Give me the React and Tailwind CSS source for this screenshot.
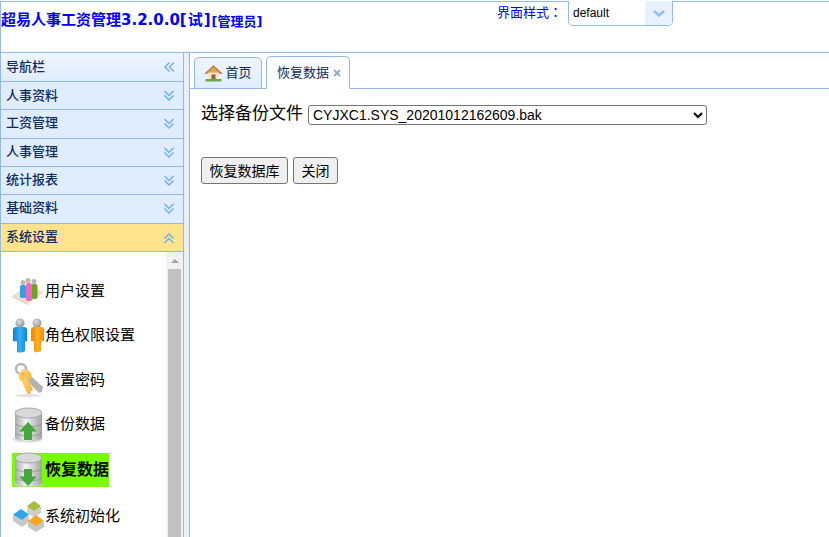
import React from 'react';

const cjk = { fontFamily: '"Liberation Sans", "Noto Sans CJK SC", sans-serif' };
const titleFont = { fontFamily: '"DejaVu Sans", "Noto Sans CJK SC", sans-serif' };

const Chevrons = ({ dir = 'down' }) => {
  const rotate = { down: 0, up: 180, left: 90 }[dir];
  return (
    <svg width="12" height="12" viewBox="0 0 12 12" fill="none" stroke="#6fb0ec" strokeWidth="1.5" style={{ transform: `rotate(${rotate}deg)` }}>
      <path d="M1.5 1 6 5.500 10.500 1" />
      <path d="M1.5 5.500 6 10 10.500 5.500" />
    </svg>
  );
};

const HouseIcon = () => (
  <svg width="19" height="18" viewBox="0 0 19 18">
    <path d="M4 8h11v7H4z" fill="#f5e6c6" />
    <path d="M.5 9.500 9.500 1l9 8.500-2 .8L9.500 4.500 2.500 10.300z" fill="#c4803a" />
    <path d="M9.500 3 15.500 8.500H3.500z" fill="#dba25c" />
    <path d="M7.500 10.500h4V15h-4z" fill="#8f6234" />
    <path d="M1.500 15h16v2.500h-16z" fill="#6aa84f" />
  </svg>
);

const UsersIcon = () => (
  <svg width="33" height="27" viewBox="0 0 33 27">
    <path d="M0 18 15 8l17 6-16 12z" fill="#f1e0c9" />
    <path d="M0 18l16 8v1L0 19z" fill="#d9c3a4" />
    <circle cx="11" cy="4.500" r="2.500" fill="#b9b9b9" />
    <circle cx="16" cy="2.500" r="2.500" fill="#c9b998" />
    <circle cx="22" cy="3.500" r="2.500" fill="#b5b5b5" />
    <rect x="8" y="7" width="6" height="13" rx="1.500" fill="#2fa3e6" />
    <rect x="19.500" y="6" width="6" height="15" rx="2" fill="#6aa51e" />
    <rect x="14" y="5" width="6" height="18" rx="2" fill="#ef66c4" />
  </svg>
);

const RolesIcon = () => (
  <svg width="32" height="35" viewBox="0 0 32 35">
    <defs>
      <radialGradient id="head" cx="0.4" cy="0.35" r="0.7">
        <stop offset="0" stopColor="#dedede" />
        <stop offset="1" stopColor="#8f8f8f" />
      </radialGradient>
      <linearGradient id="blue" x1="0" x2="1" y1="0" y2="0">
        <stop offset="0" stopColor="#0d7fd6" />
        <stop offset="0.5" stopColor="#35b0f2" />
        <stop offset="1" stopColor="#0d86dc" />
      </linearGradient>
      <linearGradient id="orange" x1="0" x2="1" y1="0" y2="0">
        <stop offset="0" stopColor="#f08000" />
        <stop offset="0.5" stopColor="#ffb020" />
        <stop offset="1" stopColor="#f58a00" />
      </linearGradient>
    </defs>
    <circle cx="7" cy="5" r="4.500" fill="url(#head)" />
    <path d="M0 12q0-3 3-3h8q3 0 3 3v11l-2 .5V33q-2 2-7 1.500L4 34V23.500L0 23z" fill="url(#blue)" />
    <circle cx="24" cy="5" r="4.500" fill="url(#head)" />
    <path d="M18 12q0-3 3-3h7q3 0 3 3v11l-3 .5V33q-2 1.500-6 1l-1-1V23.500L18 23z" fill="url(#orange)" />
  </svg>
);

const KeyIcon = () => (
  <svg width="32" height="34" viewBox="0 0 32 34">
    <defs>
      <linearGradient id="gold" x1="0" x2="1" y1="0" y2="1">
        <stop offset="0" stopColor="#ffd97a" />
        <stop offset="1" stopColor="#f3ae3a" />
      </linearGradient>
    </defs>
    <path d="M10 6 30 24l-1 5-3 1L7 11z" fill="#b3b3b3" />
    <circle cx="8" cy="6" r="5" fill="none" stroke="#b8b8b8" strokeWidth="2.500" />
    <circle cx="12" cy="13" r="6.500" fill="url(#gold)" />
    <path d="M13 14 20 26l-1 2-2 .5 1 2-2 1-2-1.500-5-11z" fill="url(#gold)" />
    <circle cx="10" cy="11" r="1.500" fill="#e2b04f" />
    <ellipse cx="15" cy="32.500" rx="13" ry="1.500" fill="#e0e0e0" />
  </svg>
);

const DbIcon = ({ up = false, id }) => (
  <svg width="32" height="36" viewBox="0 0 32 36">
    <defs>
      <linearGradient id={id} x1="0" x2="1" y1="0" y2="0">
        <stop offset="0" stopColor="#a9a9a9" />
        <stop offset="0.4" stopColor="#f4f4f4" />
        <stop offset="1" stopColor="#a2a2a2" />
      </linearGradient>
    </defs>
    <ellipse cx="15" cy="32" rx="15" ry="3.500" fill="#cdcdcd" opacity="0.7" />
    <path d="M2 6v24q0 4 13.500 4T29 30V6z" fill={`url(#${id})`} />
    <path d="M2 15q0 4 13.500 4T29 15v1.500q0 4-13.500 4T2 16.500zM2 24q0 4 13.500 4T29 24v1.500q0 4-13.500 4T2 25.500z" fill="#8f8f8f" opacity="0.55" />
    <ellipse cx="15.500" cy="6" rx="13.500" ry="5" fill="#d8d8d8" stroke="#a6a6a6" />
    {up ? (
      <path d="M15 15l9 9.500h-5V33h-8v-8.500H6z" fill="#45a83f" />
    ) : (
      <path d="M11 17h8v7.500h5L15 34l-9-9.500h5z" fill="#45a83f" />
    )}
  </svg>
);

const BlocksIcon = () => (
  <svg width="32" height="31" viewBox="0 0 32 31">
    <path d="M0 14v6l9 6 7-5v-6z" fill="#c9c9c9" />
    <path d="M8 8l8 5.500-7 5.500-9-5.500z" fill="#2ea6e6" />
    <path d="M14 6v6l7 4 7-4V6z" fill="#cdcdcd" />
    <path d="M21 0l7 5-7 5-7-5z" fill="#a8bc3a" />
    <path d="M15 21v5l8 5 8-5v-5z" fill="#c6c6c6" />
    <path d="M23 14l8 6-8 5-8-5z" fill="#f7a823" />
  </svg>
);

const sections = ['人事资料', '工资管理', '人事管理', '统计报表', '基础资料'];

const menu = [
  { label: '用户设置', icon: <UsersIcon />, h: 'h-[44px]' },
  { label: '角色权限设置', icon: <RolesIcon />, h: 'h-[44px]' },
  { label: '设置密码', icon: <KeyIcon />, h: 'h-[46px]' },
  { label: '备份数据', icon: <DbIcon up id="dbUp" />, h: 'h-[43px]' },
  { label: '恢复数据', icon: <DbIcon id="dbDown" />, h: 'h-[47px]', active: true },
  { label: '系统初始化', icon: <BlocksIcon />, h: 'h-[47px]' },
];

const SectionRow = ({ label, dir = 'down', active, labelClass = 'mb-[2px]', className = '' }) => (
  <div className={`flex items-center justify-between pl-[5px] pr-[8px] border-b border-[#95b8e7] text-[13px] font-medium text-[#0e2d5f] ${active ? 'bg-[#ffe48d]' : 'bg-[#e0ecff]'} ${className}`}>
    <span className={labelClass}>{label}</span>
    <Chevrons dir={dir} />
  </div>
);

export default function App() {
  return (
    <div className="w-[829px] h-[537px] overflow-hidden bg-white flex flex-col pt-px" style={cjk}>
      {/* header */}
      <div className="h-[52px] shrink-0 border-t border-b border-l border-[#95b8e7] flex items-start justify-between">
        <div className="pt-[8px] font-bold text-[#0000ff] leading-[20px]" style={titleFont}>
          <span className="text-[15px]">超易人事工资管理3.2.0.0</span>
          <span className="text-[15px] tracking-[1px]">[试]</span>
          <span className="text-[13px] relative top-px">[管理员]</span>
        </div>
        <div className="flex items-start mr-[156px]">
          <span className="text-[13px] text-[#0000ff] mt-[2px] mr-[6px] leading-[16px]">
            界面样式<span className="font-['Noto_Sans_CJK_TC']">：</span>
          </span>
          <div className="w-[105px] h-[25px] -mt-px bg-white border border-[#95b8e7] border-t-0 rounded-b-[5px] flex items-center justify-between overflow-hidden">
            <span className="pl-[4px] text-[12px] text-black">default</span>
            <span className="w-[27px] h-full bg-[#e8f1ff] flex items-center justify-center">
              <svg width="12" height="7" viewBox="0 0 12 7" fill="none" stroke="#8fc1ee" strokeWidth="2.500">
                <path d="M1 1l5 4.500L11 1" />
              </svg>
            </span>
          </div>
        </div>
      </div>

      <div className="flex flex-1 min-h-0">
        {/* sidebar */}
        <div className="w-[184px] shrink-0 flex flex-col border-l border-r border-[#95b8e7]">
          <SectionRow label="导航栏" dir="left" labelClass="" className="h-[29px] bg-gradient-to-b from-[#eff5ff] to-[#e0ecff]" />
          <SectionRow label={sections[0]} labelClass="" className="h-[28px]" />
          <SectionRow label={sections[1]} className="h-[29px]" />
          <SectionRow label={sections[2]} className="h-[28px]" />
          <SectionRow label={sections[3]} className="h-[28px]" />
          <SectionRow label={sections[4]} className="h-[29px]" />
          <SectionRow label="系统设置" dir="up" active className="h-[28px]" />
          <div className="flex flex-1 min-h-0">
            <div className="flex-1 pt-[17px] pl-[11px]">
              {menu.map((item) => (
                <div key={item.label} className={`flex items-center ${item.h}`}>
                  <div className={`flex items-center h-[34px] ${item.active ? 'bg-[#76ff00] font-bold text-[16px]' : 'text-[15px]'}`}>
                    <div className="w-[33px] flex justify-center shrink-0">{item.icon}</div>
                    <span className="text-black whitespace-nowrap">{item.label}</span>
                  </div>
                </div>
              ))}
            </div>
            {/* scrollbar */}
            <div className="w-[17px] shrink-0 bg-[#f1f1f1] flex flex-col items-center">
              <div className="h-[17px] flex items-center justify-center">
                <div className="w-0 h-0 border-l-[4px] border-r-[4px] border-b-[4px] border-l-transparent border-r-transparent border-b-[#a3a3a3]" />
              </div>
              <div className="w-[13px] flex-1 bg-[#c1c1c1]" />
            </div>
          </div>
        </div>

        {/* splitter */}
        <div className="w-[6px] shrink-0 bg-[#e6eefa] border-r border-[#95b8e7]" />

        {/* main */}
        <div className="flex-1 min-w-0 flex flex-col">
          <div className="h-[36px] shrink-0 border-b border-[#95b8e7] flex items-end pl-[4px] gap-[4px]">
            <div className="h-[32px] w-[68px] -mb-px flex items-center justify-center gap-[2px] border border-[#95b8e7] rounded-t-[5px] bg-gradient-to-b from-[#eff5ff] to-[#e0ecff] text-[13px] text-[#0e2d5f]">
              <HouseIcon />
              <span>首页</span>
            </div>
            <div className="h-[33px] w-[84px] -mb-px flex items-center justify-center gap-[4px] pl-[2px] border border-[#95b8e7] border-b-white rounded-t-[5px] bg-white text-[13px] text-[#0e2d5f]">
              <span>恢复数据</span>
              <svg width="8" height="8" viewBox="0 0 8 8" stroke="#8fa9c8" strokeWidth="1.800">
                <path d="M1 1l6 6M7 1 1 7" />
              </svg>
            </div>
          </div>
          <div className="pl-[11px] pt-[14px]">
            <div className="flex items-center h-[24px]">
              <span className="text-[17px] text-black mr-[5px] mb-[2px]">选择备份文件</span>
              <select defaultValue="a" className="w-[399px] h-[20px] border border-[#767676] rounded-[3px] bg-white text-[14px] text-black" style={{ appearance: 'auto' }}>
                <option value="a">CYJXC1.SYS_20201012162609.bak</option>
              </select>
            </div>
            <div className="flex gap-[5px] mt-[30px]">
              <button className="h-[27px] w-[87px] pt-[2px] border border-[#767676] rounded-[3px] bg-[#efefef] text-[14px] text-black">恢复数据库</button>
              <button className="h-[27px] w-[45px] pt-[2px] border border-[#767676] rounded-[3px] bg-[#efefef] text-[14px] text-black">关闭</button>
            </div>
          </div>
        </div>
      </div>
    </div>
  );
}
